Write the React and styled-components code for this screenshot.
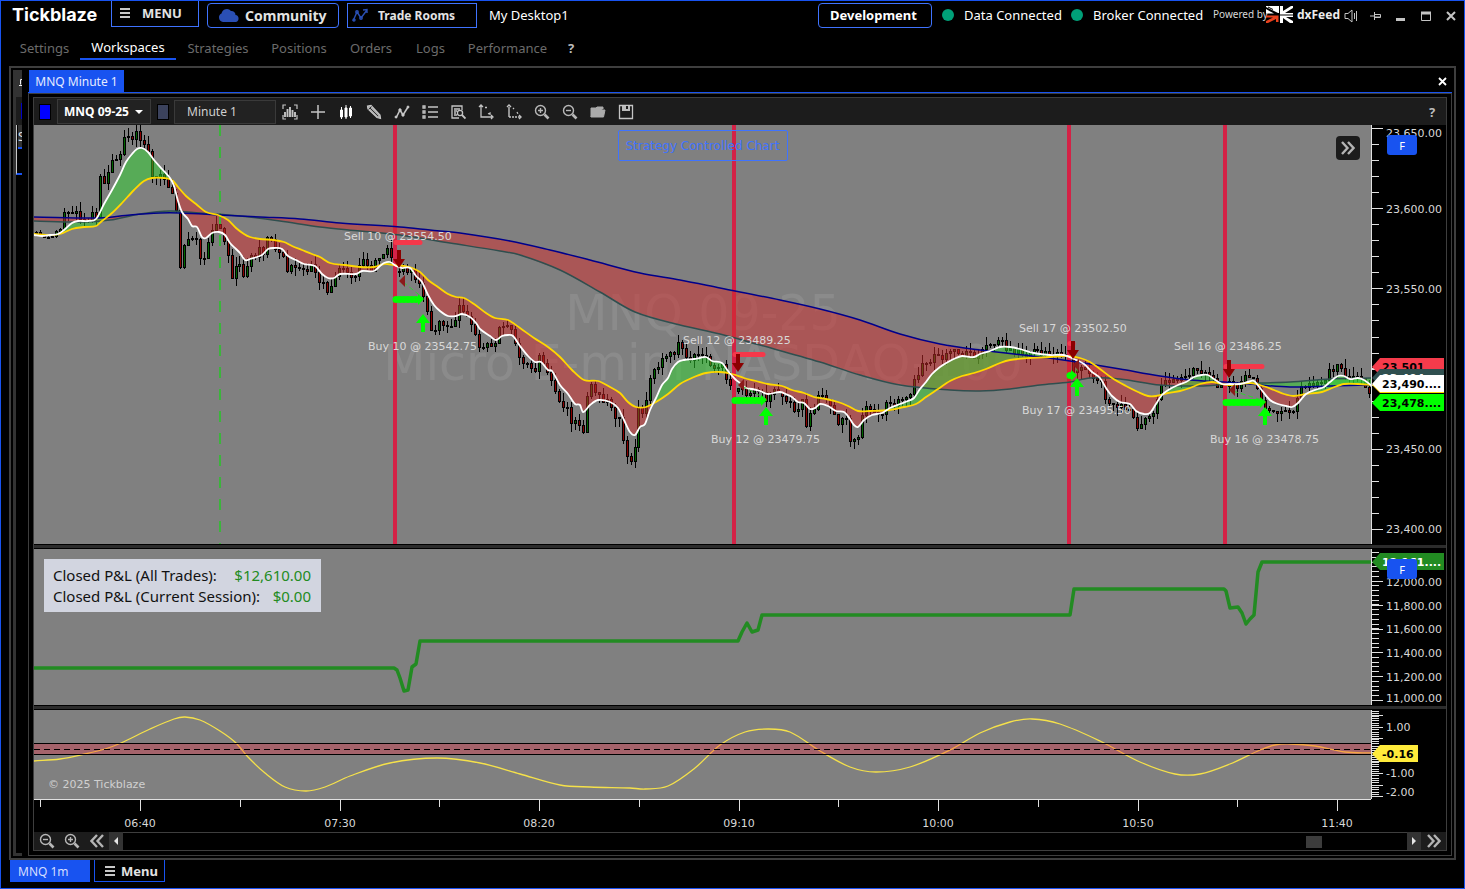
import React from 'react';
import styled, { createGlobalStyle } from 'styled-components';

const GlobalStyle = createGlobalStyle`
    * {
        box-sizing: border-box;
    }

    body {
        margin: 0;
        background: #000;
        color: #fff;
        font-family: 'Noto Sans', 'Open Sans', sans-serif;
    }

    button, input, select {
        font-family: inherit;
        color: inherit;
        margin: 0;
    }
`;

const Window = styled.div`
    display: flex;
    flex-direction: column;
    min-height: 100vh;
    border: 1px solid #1853f0;
    background: #000;
`;

const TitleBar = styled.header`
    display: flex;
    align-items: flex-start;
    height: 30px;
    padding-left: 11px;
    padding-right: 1px;
`;

const Brand = styled.h1`
    width: 99px;
    margin: 0;
    font-family: Inter, sans-serif;
    font-size: 18px;
    line-height: 28px;
    font-weight: 700;
`;

const TitleButton = styled.button`
    display: flex;
    align-items: center;
    gap: ${props => props.$gap || 0}px;
    width: ${props => props.$width}px;
    height: ${props => (props.$docked ? 26 : 25)}px;
    margin-top: ${props => (props.$docked ? 0 : 2)}px;
    margin-right: 8px;
    padding: 0 0 1px ${props => props.$pad}px;
    border: 1px solid #3f73ff;
    border-top-width: ${props => (props.$docked ? 0 : 1)}px;
    border-radius: ${props => (props.$round ? 4 : 0)}px;
    background: #000;
    color: ${props => props.$color || '#e3e3e3'};
    font-size: ${props => props.$size || 13}px;
    font-weight: 700;
    white-space: nowrap;
`;

const TitleText = styled.span`
    width: ${props => (props.$width ? `${props.$width}px` : 'auto')};
    font-size: 13px;
    line-height: 28px;
    white-space: nowrap;
`;

const DesktopName = styled(TitleText)`
    margin-left: 4px;
`;

const Spacer = styled.div`
    flex: 1;
`;

const Dot = styled.span`
    width: 12px;
    height: 12px;
    margin: 8px 10px 0 ${props => props.$left}px;
    border-radius: 50%;
    background: #00a078;
`;

const Powered = styled.span`
    width: 53px;
    font-size: 10px;
    line-height: 26px;
    color: #d8d8d8;
    white-space: nowrap;
`;

const FeedName = styled.strong`
    width: 45px;
    padding-left: 4px;
    font-size: 12px;
    line-height: 27px;
    color: #ececec;
`;

const FeedLogo = styled.svg`
    width: 27px;
    height: 17px;
    margin-top: 5px;
`;

const SystemButton = styled.button`
    display: flex;
    align-items: center;
    justify-content: center;
    width: 25px;
    height: 30px;
    padding: 0;
    border: 0;
    background: none;
    color: #c4c4c4;
`;

const Nav = styled.nav`
    display: flex;
    height: 35px;
    padding-left: 8px;
`;

const NavLink = styled.a`
    width: ${props => props.$width}px;
    height: 29px;
    border-bottom: 2px solid ${props => (props.$active ? '#1853f0' : 'transparent')};
    color: ${props => (props.$active ? '#fff' : '#6b6b6b')};
    font-size: 13px;
    line-height: ${props => (props.$active ? 33 : 34)}px;
    text-align: center;
    text-decoration: none;
`;

const Help = styled.button`
    padding: 0;
    border: 0;
    background: none;
    color: #bcbcbc;
    font-size: 13px;
    font-weight: 700;
    line-height: 34px;
    height: 34px;
    width: ${props => props.$width}px;
`;

const Dock = styled.main`
    flex: 1;
    display: flex;
    margin: 0 8px;
    padding: 2px 2px 2px 2px;
    border: 2px solid #3e3e3e;
`;

const Stub = styled.aside`
    display: flex;
    flex-direction: column;
    width: 9px;
    margin-right: 6px;
    overflow: hidden;
    border-left: 3px solid #333;
    border-bottom: 3px solid #333;
`;

const StubHead = styled.div`
    height: 27px;
    background: #333;
`;

const StubBar = styled.div`
    height: 28px;
    padding: 6px 0 5px 5px;
    background: #1c1c1c;

    &::before {
        content: '';
        display: block;
        height: 16px;
        background: #0000c8;
    }
`;

const StubBox = styled.div`
    height: 50px;
    padding-left: 1px;
    border-left: 1px solid #c8c8c8;
    border-bottom: 2px solid #1853f0;
    font-size: 13px;
    line-height: 22px;
    color: #e0e0e0;

    span {
        display: block;
        height: 24px;
        border-bottom: 2px solid #1853f0;
        background: #333;
    }
`;

const Document = styled.section`
    flex: 1;
    display: flex;
    flex-direction: column;
    min-width: 0;
`;

const TabStrip = styled.div`
    display: flex;
    align-items: flex-end;
    justify-content: space-between;
    padding-left: 1px;
    height: 23px;
    border-bottom: 1px solid #1853f0;
`;

const ChartTab = styled.button`
    width: 95px;
    height: 22px;
    padding: 0;
    border: 0;
    background: #1853f0;
    color: #e6ebff;
    font-size: 12px;
`;

const CloseTab = styled.button`
    display: flex;
    align-items: center;
    height: 22px;
    padding: 0 5px;
    border: 0;
    background: none;
`;

const Frame = styled.div`
    flex: 1;
    display: flex;
    padding: 3px 4px 4px;
    border: 1px solid #3e3e3e;
`;

const Chart = styled.div`
    flex: 1;
    display: flex;
    flex-direction: column;
    min-width: 0;
    border: 1px solid #3e3e3e;
`;

const Toolbar = styled.div`
    display: flex;
    align-items: center;
    height: 27px;
    padding-left: 5px;
    background: #1c1c1c;
`;

const Swatch = styled.button`
    width: 12px;
    height: 16px;
    padding: 0;
    margin-right: ${props => props.$right}px;
    border: 1px solid #000;
    background: ${props => props.$color};
`;

const SymbolBox = styled.label`
    display: flex;
    align-items: center;
    position: relative;
    width: 94px;
    height: 25px;
    margin-right: 6px;
    border: 1px solid #3a3a3a;
    background: #222;

    svg {
        position: absolute;
        right: 7px;
        pointer-events: none;
    }
`;

const SymbolSelect = styled.select`
    width: 100%;
    height: 100%;
    padding: 0 0 0 6px;
    border: 0;
    appearance: none;
    background: none;
    font-size: 12px;
    font-weight: 700;
`;

const PeriodInput = styled.input`
    width: 102px;
    height: 24px;
    padding: 0 12px;
    border: 1px solid #3a3a3a;
    background: #222;
    color: #d0d0d0;
    font-size: 12px;
`;

const IconButton = styled.button`
    display: flex;
    align-items: center;
    justify-content: center;
    width: ${props => props.$width || 28}px;
    height: ${props => props.$height || 27}px;
    padding: 0;
    border: 0;
    background: ${props => props.$bg || 'none'};
    color: #c4c4c4;
`;

const Pane = styled.div`
    display: flex;
    flex: ${props => props.$share} 1 0;
    min-height: 0;
`;

const Plot = styled.div`
    position: relative;
    flex: 1;
    min-width: 0;
    overflow: hidden;
    background: #808080;
`;

const Axis = styled.div`
    position: relative;
    width: 75px;
    overflow: hidden;
    background: #000;
`;

const Drawing = styled.svg`
    position: absolute;
    inset: 0;
    width: 100%;
    height: 100%;
    font-family: 'DejaVu Sans', Verdana, sans-serif;
    font-size: 11px;
`;

const Splitter = styled.div`
    height: 5px;
    border: 1px solid #000;
    border-width: 1px 0;
    background: #2c2c2c;
`;

const TimeAxis = styled.div`
    display: flex;
    position: relative;
    height: 33px;
`;

const StrategyButton = styled.button`
    position: absolute;
    top: 5px;
    left: 50%;
    transform: translateX(-50%);
    width: 170px;
    height: 31px;
    padding: 0;
    border: 1px solid #3f73ff;
    border-radius: 2px;
    background: none;
    color: #3f73ff;
    font-family: 'DejaVu Sans', Verdana, sans-serif;
    font-size: 12px;
`;

const ExpandButton = styled.button`
    position: absolute;
    top: 11px;
    right: 11px;
    display: flex;
    align-items: center;
    justify-content: center;
    width: 24px;
    height: 24px;
    padding: 0;
    border: 0;
    border-radius: 4px;
    background: #1c1c1c;
    color: #c4c4c4;
`;

const FixedButton = styled.button`
    position: absolute;
    top: 10px;
    left: 16px;
    width: 30px;
    height: 20px;
    padding: 0;
    border: 0;
    border-radius: 3px;
    background: #1853f0;
    color: #fff;
    font-size: 11px;
`;

const Legend = styled.dl`
    position: absolute;
    top: 10px;
    left: 10px;
    width: 277px;
    margin: 0;
    padding: 6px 10px 5px 9px;
    background: #d2d5e0;
    color: #111;
    font-size: 15px;
    line-height: 21px;

    div {
        display: flex;
        justify-content: space-between;
    }

    dd {
        margin: 0;
        color: #228b22;
    }
`;

const ScrollRow = styled.div`
    display: flex;
    height: 18px;
`;

const Track = styled.div`
    flex: 1;
    display: flex;
    align-items: center;
    justify-content: flex-end;
    padding-right: 85px;
    border-top: 1px solid #3e3e3e;
`;

const Thumb = styled.div`
    width: 16px;
    height: 12px;
    background: #3c3c3c;
`;

const Footer = styled.footer`
    display: flex;
    gap: 4px;
    height: 28px;
    padding-left: 9px;
`;

const DesktopTab = styled.button`
    width: 80px;
    height: 22px;
    padding: 0 0 0 8px;
    border: 0;
    background: #1853f0;
    color: #d5deff;
    font-size: 12px;
    text-align: left;
`;

const FooterMenu = styled.button`
    display: flex;
    align-items: center;
    gap: 6px;
    width: 71px;
    height: 22px;
    padding: 0 0 0 10px;
    border: 1px solid #1853f0;
    border-top: 0;
    background: #000;
    color: #e3e3e3;
    font-size: 13px;
    font-weight: 700;
`;

const FAST = [
    34,235, 42,236, 50,235, 58,234, 64,230, 72,223, 78,221, 88,221, 96,219, 104,204, 112,190, 120,175, 126,162, 132,154,
    137,149, 142,148, 148,152, 154,160, 162,169, 170,178, 174,186, 178,201, 182,212, 188,219, 192,226, 197,227, 202,237,
    206,238, 212,233, 219,232, 225,235, 230,243, 236,249, 240,253, 245,260, 250,259, 262,255, 268,249, 274,248, 282,249,
    288,256, 296,260, 304,264, 315,266, 322,274, 328,278, 334,278, 340,274, 356,274, 362,271, 374,271, 380,266, 384,263,
    390,262, 396,266, 402,268, 410,268, 416,276, 422,282, 428,295, 434,305, 440,311, 448,316, 456,316, 462,314, 470,317,
    476,323, 480,329, 490,336, 496,340, 502,336, 508,335, 513,336, 520,346, 528,356, 535,362, 541,362, 548,370, 552,371,
    560,385, 568,394, 575,404, 580,405, 583,412, 590,405, 598,400, 610,402, 618,408, 624,420, 630,432, 635,435, 640,427,
    645,424, 650,410, 656,398, 662,385, 668,378, 672,369, 678,362, 684,360, 694,359, 700,358, 706,357, 712,361, 722,363,
    728,371, 735,379, 740,383, 746,388, 752,389, 760,391, 768,394, 780,392, 788,395, 792,397, 798,402, 804,403, 810,409,
    815,408, 820,404, 828,406, 836,411, 844,412, 850,419, 854,425, 858,427, 864,420, 872,415, 882,413, 890,408, 900,404,
    908,401, 914,398, 920,389, 926,382, 932,374, 940,367, 948,362, 956,358, 962,356, 974,357, 980,354, 990,351, 1000,347,
    1010,347, 1020,349, 1034,353, 1050,355, 1064,355, 1074,359, 1084,364, 1092,372, 1100,378, 1106,388, 1112,396,
    1120,402, 1130,404, 1136,411, 1144,414, 1150,413, 1156,404, 1162,395, 1170,389, 1178,385, 1186,382, 1194,377,
    1202,375, 1208,375, 1214,379, 1222,384, 1230,384, 1240,384, 1248,382, 1254,381, 1260,388, 1270,400, 1278,404,
    1286,406, 1292,407, 1298,403, 1306,394, 1318,389, 1324,387, 1330,382, 1338,376, 1344,376, 1350,379, 1358,378,
    1364,380, 1372,386,
];

const SLOW = [
    34,234, 50,235, 60,234, 72,229, 84,227, 96,226, 102,221, 112,213, 122,203, 134,190, 144,181, 152,178, 164,178,
    172,180, 178,187, 186,196, 196,204, 206,212, 218,215, 228,220, 236,228, 244,234, 250,237, 260,239, 274,240, 284,242,
    292,246, 302,250, 312,254, 320,257, 330,263, 345,265, 360,267, 374,267, 384,264, 394,265, 404,266, 412,268, 420,272,
    428,280, 438,287, 448,294, 456,297, 464,298, 474,304, 486,313, 495,318, 508,320, 520,328, 534,338, 548,347, 560,357,
    572,370, 584,380, 598,381, 610,387, 620,393, 628,402, 636,407, 646,407, 656,402, 668,394, 680,384, 694,377, 706,373,
    720,372, 732,374, 744,378, 756,381, 768,384, 782,386, 792,390, 804,393, 814,397, 826,399, 838,402, 848,406, 858,411,
    870,411, 890,410, 904,407, 916,404, 926,397, 938,389, 950,381, 962,376, 974,373, 986,369, 1000,363, 1010,360,
    1030,358, 1050,357, 1066,356, 1080,358, 1090,362, 1100,369, 1112,378, 1126,386, 1138,392, 1148,396, 1156,396,
    1168,393, 1180,391, 1190,388, 1200,384, 1212,382, 1222,384, 1230,385, 1250,383, 1260,385, 1274,390, 1284,394,
    1294,396, 1306,394, 1322,392, 1332,388, 1344,384, 1358,384, 1372,385,
];

const TREND = [
    34,217, 100,218, 130,215, 160,213, 180,213, 220,215, 260,217, 300,219, 340,223, 400,227, 430,230, 460,233, 510,241,
    550,250, 590,260, 640,273, 680,280, 720,288, 780,300, 820,309, 860,320, 900,334, 940,344, 980,350, 1040,357,
    1070,361, 1096,365, 1120,369, 1160,376, 1190,380, 1224,382, 1260,385, 1290,387, 1330,386, 1372,385,
];

const BASE = [
    34,221, 80,222, 110,220, 140,214, 170,211, 200,213, 240,216, 280,221, 320,227, 360,231, 400,235, 450,243, 500,251,
    520,255, 560,270, 600,292, 635,312, 680,325, 720,334, 760,345, 820,362, 860,375, 900,385, 950,390, 980,391,
    1010,389, 1040,385, 1070,382, 1090,378, 1120,379, 1160,385, 1200,386, 1230,384, 1290,382, 1330,379, 1372,378,
];

const CLOSES = [
    34,233, 42,236, 50,237, 56,231, 62,228, 64,213, 70,215, 78,215, 84,222, 90,220, 92,210, 96,214, 99,175, 104,183,
    108,170, 112,158, 120,156, 124,138, 130,140, 134,130, 138,134, 142,145, 148,152, 152,176, 158,174, 162,178, 170,188,
    174,200, 178,225, 180,271, 184,248, 188,238, 194,237, 200,255, 206,256, 210,230, 216,224, 222,230, 226,247, 232,275,
    240,262, 244,282, 248,262, 254,255, 260,248, 264,252, 268,232, 274,245, 282,252, 288,273, 292,265, 298,262, 304,272,
    312,267, 318,280, 324,286, 328,294, 332,280, 336,272, 342,265, 350,275, 356,272, 362,260, 370,268, 378,262, 382,250,
    388,250, 392,258, 396,276, 400,272, 404,268, 410,270, 414,280, 420,285, 424,303, 428,316, 432,333, 438,323, 444,325,
    450,325, 456,320, 460,302, 466,315, 474,328, 480,353, 486,342, 494,347, 498,330, 502,325, 508,323, 512,335, 518,352,
    520,369, 526,362, 534,374, 540,355, 546,372, 554,385, 558,403, 566,406, 572,423, 578,418, 582,438, 586,405, 590,383,
    596,393, 602,403, 610,402, 616,418, 620,418, 624,446, 628,460, 634,455, 638,408, 644,420, 648,385, 654,370, 660,363,
    668,358, 674,350, 680,344, 686,356, 692,358, 698,355, 706,354, 712,366, 718,364, 724,368, 728,388, 734,390, 740,385,
    746,393, 754,392, 760,388, 766,403, 770,390, 776,388, 782,396, 790,402, 798,412, 802,398, 806,423, 812,413, 818,392,
    824,400, 830,408, 838,420, 846,417, 850,440, 854,442, 858,438, 862,415, 866,405, 874,410, 880,418, 888,398, 894,404,
    902,396, 910,393, 918,372, 924,365, 932,358, 940,355, 944,358, 952,350, 960,353, 968,352, 974,355, 980,350, 988,348,
    994,348, 998,340, 1004,346, 1012,350, 1022,355, 1034,350, 1042,352, 1050,352, 1058,353, 1068,358, 1074,372,
    1082,365, 1090,372, 1094,383, 1100,380, 1106,400, 1112,405, 1118,412, 1122,402, 1126,408, 1134,415, 1138,428,
    1144,418, 1150,420, 1156,402, 1160,382, 1166,380, 1174,380, 1184,375, 1190,373, 1196,366, 1202,370, 1208,375,
    1214,382, 1220,390, 1230,382, 1236,385, 1242,382, 1248,375, 1254,378, 1260,398, 1266,405, 1270,415, 1276,410,
    1282,413, 1288,411, 1294,408, 1300,390, 1306,382, 1314,386, 1322,380, 1330,370, 1338,363, 1344,374, 1352,380,
    1358,376, 1364,386, 1372,392,
];

const PROFIT = [
    34,668, 394,668, 397,670, 400,678, 404,691, 408,690, 412,667, 416,664, 420,641, 738,641, 742,632, 747,623, 752,632,
    758,630, 762,615, 1070,615, 1074,589, 1224,589, 1226,591, 1230,608, 1238,607, 1242,613, 1246,624, 1250,619,
    1254,615, 1258,572, 1262,562, 1372,562,
];

const CYCLE = [
    34,761, 60,759, 85,754, 105,749, 121,743, 150,729, 174,719, 185,717, 200,720, 220,731, 236,743, 248,757, 265,773,
    285,787, 306,791, 325,787, 350,776, 390,763, 437,758, 480,763, 520,774, 560,785, 590,787, 630,788, 645,789, 668,786,
    695,768, 720,745, 745,732, 768,729, 790,732, 820,751, 850,767, 876,772, 910,767, 950,750, 980,733, 1010,722,
    1032,719, 1060,724, 1100,741, 1140,762, 1175,774, 1200,774, 1230,764, 1260,750, 1275,745, 1290,744, 1315,746,
    1345,752, 1372,753,
];

const TRADES = [
    { bar: 395, end: 420, stop: 242, target: 299, sell: 250, buy: 314, exit: 423, mark: 281, sellText: [344, 240, 'Sell 10 @ 23554.50'], buyText: [368, 350, 'Buy 10 @ 23542.75'] },
    { bar: 734, end: 763, stop: 354, target: 400, sell: 354, buy: 407, exit: 766, mark: 385, sellText: [683, 344, 'Sell 12 @ 23489.25'], buyText: [711, 443, 'Buy 12 @ 23479.75'] },
    { bar: 1069, end: 1073, stop: 343, target: 375, sell: 341, buy: 378, exit: 1077, mark: 365, sellText: [1019, 332, 'Sell 17 @ 23502.50'], buyText: [1022, 414, 'Buy 17 @ 23495.50'] },
    { bar: 1225, end: 1262, stop: 366, target: 402, sell: 360, buy: 407, exit: 1265, mark: 390, sellText: [1174, 350, 'Sell 16 @ 23486.25'], buyText: [1210, 443, 'Buy 16 @ 23478.75'] },
];

const toPoints = data => {
    const points = [];
    for (let i = 0; i < data.length; i += 2) {
        points.push([data[i], data[i + 1]]);
    }
    return points;
};

const linePath = data => `M${toPoints(data).map(p => p.join(' ')).join('L')}`;

const curvePath = data => {
    const pts = toPoints(data);
    let d = `M${pts[0]}`;
    for (let i = 0; i < pts.length - 1; i++) {
        const a = pts[i - 1] || pts[i];
        const b = pts[i];
        const c = pts[i + 1];
        const e = pts[i + 2] || c;
        const third = (c[0] - b[0]) / 3;
        const inSlope = (c[1] - a[1]) / (c[0] - a[0]);
        const outSlope = (e[1] - b[1]) / (e[0] - b[0]);
        d += `C${b[0] + third} ${b[1] + inSlope * third} ${c[0] - third} ${c[1] - outSlope * third} ${c[0]} ${c[1]}`;
    }
    return d;
};

const valueAt = (pts, x) => {
    let i = 1;
    while (i < pts.length - 1 && pts[i][0] < x) i++;
    const [x0, y0] = pts[i - 1];
    const [x1, y1] = pts[i];
    return y0 + ((y1 - y0) * (x - x0)) / (x1 - x0);
};

// Splits the area between two lines by which one is on top
const bands = (first, second) => {
    const a = toPoints(first);
    const b = toPoints(second);
    let up = '';
    let down = '';
    let run = [];
    let sign = null;
    const flush = () => {
        if (run.length > 1) {
            const top = run.map(r => `${r[0]} ${r[1]}`);
            const bottom = run.map(r => `${r[0]} ${r[2]}`).reverse();
            const d = `M${top.concat(bottom).join('L')}Z`;
            if (sign) up += d;
            else down += d;
        }
    };
    for (let x = 34; x <= 1372; x += 2) {
        const row = [x, valueAt(a, x), valueAt(b, x)];
        const next = row[1] < row[2];
        if (sign !== null && next !== sign) {
            run.push(row);
            flush();
            run = [];
        }
        sign = next;
        run.push(row);
    }
    flush();
    return { up, down };
};

const noise = n => {
    const v = Math.sin(n * 127.1) * 43758.5453;
    return v - Math.floor(v);
};

const buildCandles = () => {
    const pts = toPoints(CLOSES);
    const candles = [];
    let open = 232;
    for (let i = 0; i < 335; i++) {
        const x = Math.round(36 + i * 3.99);
        const calm = x < 62;
        const close = Math.round(valueAt(pts, x) + (noise(i) - 0.5) * (calm ? 3 : 8));
        const top = Math.min(open, close);
        const bottom = Math.max(open, close);
        const scale = calm ? 2 : 9;
        candles.push({
            x,
            top,
            height: Math.max(bottom - top, 1),
            high: x === 1050 ? 330 : Math.round(top - noise(i + 400) * scale),
            low: x === 1090 ? 405 : Math.round(bottom + noise(i + 900) * scale),
            rising: close < open,
        });
        open = close;
    }
    return candles;
};

const CANDLES = buildCandles();
const CLOUD = bands(TREND, BASE);
const RIBBON = bands(FAST, SLOW);

const range = (count, start, step) => Array.from({ length: count }, (_, i) => Math.round(start + i * step));

const Bars = ({ size = 12, width = 10 }) => (
    <svg width={width} height={size} viewBox="0 0 10 12" stroke="#c8c8c8" strokeWidth="2">
        <path d="M0 2H10M0 6H10M0 10H10" />
    </svg>
);

const Chevrons = ({ flip }) => (
    <svg width="14" height="14" viewBox="0 0 14 14" fill="none" stroke="#b4b4b4" strokeWidth="2.4" transform={flip ? 'scale(-1 1)' : undefined}>
        <path d="M1 1L6.500 7L1 13M7 1L12.500 7L7 13" />
    </svg>
);

const Magnifier = ({ plus }) => (
    <svg width="16" height="16" viewBox="0 0 16 16" fill="none" stroke="#b8b8b8" strokeWidth="1.400">
        <circle cx="6.500" cy="6.500" r="5" />
        <path d={plus ? 'M4 6.500H9M6.500 4V9' : 'M4 6.500H9'} />
        <path d="M10.500 10.500L14.500 14.500" strokeWidth="2.600" />
    </svg>
);

const Triangle = ({ flip }) => (
    <svg width="4" height="8" viewBox="0 0 4 8">
        <path d={flip ? 'M0 0L4 4L0 8Z' : 'M4 0L0 4L4 8Z'} fill="#e6e6e6" />
    </svg>
);

const TOOLS = [
    ['Chart type', <g key="i"><path d="M1 5V1H4M12 1H15V5M1 11V15H4M12 15H15V11" strokeWidth="1.200" /><path d="M3 8V13M5.500 5V13M8 3V13M10.500 6V13M13 8V13" strokeWidth="1.900" /></g>],
    ['Crosshair', <path key="i" d="M8 1V15M1 8H15" strokeWidth="1.500" />],
    ['Candles', <path key="i" stroke="#fff" strokeWidth="1" fill="#fff" d="M3.500 3V15M2.500 6H4.500V13H2.500ZM8 1V15M7 4H9V13H7ZM12.500 2V14M11.500 4H13.500V12H11.500Z" />],
    ['Draw', <g key="i"><path d="M1.500 2L5 1.500L14 11L14.500 14.500L11 13.500L2 5Z" fill="#aaa" strokeWidth="1.200" /><path d="M4 4L12 12M2.500 5.500L5.500 2.500" stroke="#333" strokeWidth="1" /></g>],
    ['Indicators', <g key="i"><path d="M2 14L6 6L9 11L14 3" strokeWidth="1.600" /><circle cx="6" cy="6" r="1.200" fill="#ddd" /><circle cx="2" cy="13" r="1" fill="#ddd" /><circle cx="9" cy="11" r="1.200" fill="#ddd" /><circle cx="14" cy="3" r="1" fill="#ddd" /></g>],
    ['List', <path key="i" d="M6 3H16M6 8H16M6 13H16M1 2H3V4H1ZM1 7H3V9H1ZM1 12H3V14H1Z" strokeWidth="1.300" />],
    ['Data window', <g key="i"><path d="M12 6V2H2V14H9M4 5H10M4 7H7M4 9H6M4 11H7" strokeWidth="1.300" /><circle cx="10" cy="9" r="2.600" strokeWidth="1.300" /><path d="M12 11L15.500 14.500" strokeWidth="1.800" /></g>],
    ['Scale', <path key="i" d="M3 2V13H14M1 3L3 1L5 3M13 11L15 13L13 15M7 3.500H9M10 10L12 9V11" strokeWidth="1.300" />],
    ['Fix scale', <g key="i"><path d="M3 3V13M1 3L3 1L5 3M13 11L15 13L13 15" strokeWidth="1.400" /><path d="M3 13H14M7 4L8 5M11 8L12 10" strokeWidth="1.300" strokeDasharray="2 1" /></g>],
    ['Zoom in', null],
    ['Zoom out', null],
    ['Open', <path key="i" d="M1 13V4H6L7 3H13V5M1 13L3 6H15L13.500 13Z" fill="#aaa" stroke="#aaa" strokeWidth="1" />],
    ['Save', <g key="i"><path d="M1.500 1.500H14.500V14.500H1.500Z" strokeWidth="1.300" /><path d="M4 2H12V7H4Z" fill="#bbb" stroke="none" /><path d="M9 2V5" stroke="#1c1c1c" strokeWidth="2" /></g>],
];

const MENU_ITEMS = [
    ['Settings', 71], ['Workspaces', 96], ['Strategies', 84], ['Positions', 78], ['Orders', 66], ['Logs', 53], ['Performance', 101],
];

const Trade = ({ trade }) => {
    const x = trade.bar + 4;
    return (
        <g>
            <path d={`M${trade.bar + 1} ${trade.stop + 0.5}H${trade.end}`} stroke="#f5384a" strokeWidth="5" strokeLinecap="round" />
            <path d={`M${trade.bar + 1} ${trade.target + 0.5}H${trade.end}`} stroke="#0f0" strokeWidth="7" strokeLinecap="round" strokeDasharray="0 4" />
            <path d={`M${trade.bar} ${trade.target + 0.5}H${trade.end}`} stroke="#0f0" strokeWidth="5" />
            <path d={`M${trade.end - 2} ${trade.target - 5}L${trade.end + 4} ${trade.target}L${trade.end - 2} ${trade.target + 6}Z`} fill="#0f0" />
            <path d={`M${x + 4} ${trade.mark + 1}L${trade.exit} ${trade.target - 1}`} stroke="#32cd32" strokeWidth="1" strokeDasharray="5 3" />
            <path d={`M${x} ${trade.mark}L${x + 6} ${trade.mark - 6}V${trade.mark + 6}Z`} fill="#8b1a1a" />
            <path d={`M${x - 2} ${trade.sell}h4v9h4l-6 9l-6 -9h4Z`} fill="#8b0000" />
            <path d={`M${trade.exit} ${trade.buy}l7 9h-5v9h-4v-9h-5Z`} fill="#0f0" />
            <text x={trade.sellText[0]} y={trade.sellText[1]}>{trade.sellText[2]}</text>
            <text x={trade.buyText[0]} y={trade.buyText[1]}>{trade.buyText[2]}</text>
        </g>
    );
};

const PricePlot = () => (
    <Drawing viewBox="34 125 1337 419" preserveAspectRatio="xMaxYMin slice">
        <g fill="#8b8b8b" fontSize="49" textAnchor="middle">
            <text x="703" y="330">MNQ 09-25</text>
            <text x="703" y="380">Micro E-mini NASDAQ-100</text>
        </g>
        <g shapeRendering="crispEdges">
            {CANDLES.map(c => (
                <g key={c.x}>
                    <path d={`M${c.x + 0.5} ${c.high}V${c.low}`} stroke="#000" />
                    <rect x={c.x - 0.5} y={c.top + 0.5} width="2" height={c.height} fill={c.rising ? '#006400' : '#8b0000'} stroke="#000" />
                </g>
            ))}
        </g>
        <g stroke="#d32246" strokeWidth="4">
            {TRADES.map(t => <path key={t.bar} d={`M${t.bar} 125V544`} />)}
        </g>
        <g fillOpacity="0.5">
            <path d={CLOUD.down} fill="#2ed62e" />
            <path d={CLOUD.up} fill="#d32c2c" />
            <path d={RIBBON.up} fill="#2ed62e" />
            <path d={RIBBON.down} fill="#d32c2c" />
        </g>
        <path d="M220 125V544" stroke="#3cb43c" strokeWidth="2" strokeDasharray="11 11" shapeRendering="crispEdges" />
        <g fill="none" strokeWidth="1.500">
            <path d={curvePath(BASE)} stroke="#2f4f4f" />
            <path d={curvePath(TREND)} stroke="#00008b" />
            <path d={curvePath(SLOW)} stroke="#ffd700" strokeWidth="1.800" />
            <path d={curvePath(FAST)} stroke="#fff" strokeWidth="1.800" />
        </g>
        <g fill="#d8d8d8">
            {TRADES.map(t => <Trade key={t.bar} trade={t} />)}
        </g>
    </Drawing>
);

const Tag = ({ y, color, text, ink = '#000', width = 72 }) => (
    <g>
        <path d={`M1372 ${y}L1380 ${y - 9}H${1372 + width}V${y + 8}H1380Z`} fill={color} />
        <text x="1382" y={y + 4} fill={ink} fontWeight="700">{text}</text>
    </g>
);

const Ticks = ({ major, minor }) => (
    <path
        stroke="#e0e0e0"
        shapeRendering="crispEdges"
        d={major.map(y => `M1371 ${y + 0.5}h12`).join('') + minor.map(y => `M1371 ${y + 0.5}h8`).join('')}
    />
);

const Labels = ({ items }) => (
    <g fill="#d8d8d8">
        {items.map(([y, text]) => <text key={text} x="1386" y={y + 4}>{text}</text>)}
    </g>
);

const TIMES = ['06:40', '07:30', '08:20', '09:10', '10:00', '10:50', '11:40'];

function App() {
    return (
        <Window>
            <GlobalStyle />
            <TitleBar>
                <Brand>Tickblaze</Brand>
                <TitleButton $width={88} $pad={8} $gap={12} $docked><Bars /> MENU</TitleButton>
                <TitleButton $width={132} $pad={10} $gap={6} $size={14} $round>
                    <svg width="21" height="14" viewBox="0 0 21 14">
                        <path d="M5 14A4.500 4.500 0 0 1 3.500 5.500A5.500 5.500 0 0 1 13 3A4 4 0 0 1 17.500 7A3.600 3.600 0 0 1 18 14Z" fill="#2a4fb4" />
                    </svg>
                    Community
                </TitleButton>
                <TitleButton $width={130} $pad={4} $gap={10} $size={12}>
                    <svg width="16" height="14" viewBox="0 0 16 14" fill="none" stroke="#2a4fb4" strokeWidth="1.400">
                        <path d="M1 13L5 4L9 10L15 2M11 2L15 1.500V5" />
                        <circle cx="5" cy="4" r="1.200" /><circle cx="9" cy="10" r="1.200" /><circle cx="2" cy="12" r="1" />
                    </svg>
                    Trade Rooms
                </TitleButton>
                <DesktopName>My Desktop1</DesktopName>
                <Spacer />
                <TitleButton $width={114} $pad={11} $size={13} $color="#fff" $round>Development</TitleButton>
                <Dot $left={2} />
                <TitleText $width={97}>Data Connected</TitleText>
                <Dot $left={10} />
                <TitleText $width={120}>Broker Connected</TitleText>
                <Powered>Powered by</Powered>
                <FeedLogo viewBox="0 0 27 17" fill="#fff">
                    <path d="M0 0H13V7H12L0 1ZM0 3L8 7.500H0Z" />
                    <path d="M0 9.500H12.500V16H10V13L2 17H0V15L7 11.500H0Z" fill="#e8401c" />
                    <path d="M14 0H17V5L25 0H27V2L19 7H27V8.500H14ZM14 9.500H27V11H20L27 15V17H24L17 12V17H14Z" />
                    <path d="M2 1L7 3.500M17.500 0.500H23" stroke="#000" />
                </FeedLogo>
                <FeedName>dxFeed</FeedName>
                <SystemButton aria-label="Sound">
                    <svg width="14" height="14" viewBox="0 0 14 14" fill="none" stroke="currentColor"><path d="M1 4.500H4L8 1V13L4 9.500H1ZM10.500 4V10M12.500 2V12" /></svg>
                </SystemButton>
                <SystemButton aria-label="Pin">
                    <svg width="12" height="10" viewBox="0 0 12 10" fill="none" stroke="currentColor"><path d="M0 5H4M4.500 1V9M5 3.500H10.500V6.500H5M5 6H10" /></svg>
                </SystemButton>
                <SystemButton aria-label="Minimize">
                    <svg width="10" height="10" viewBox="0 0 10 10"><path d="M0 7H9V10H0Z" fill="currentColor" /></svg>
                </SystemButton>
                <SystemButton aria-label="Maximize">
                    <svg width="10" height="10" viewBox="0 0 10 10" fill="none" stroke="currentColor"><path d="M0.500 1.500H9.500V9.500H0.500Z" /><path d="M0 2H10" strokeWidth="3" /></svg>
                </SystemButton>
                <SystemButton aria-label="Close">
                    <svg width="10" height="10" viewBox="0 0 10 10" stroke="currentColor" strokeWidth="2"><path d="M1 1L9 9M9 1L1 9" /></svg>
                </SystemButton>
            </TitleBar>
            <Nav>
                {MENU_ITEMS.map(([label, width]) => (
                    <NavLink key={label} href="#" $width={width} $active={label === 'Workspaces'}>{label}</NavLink>
                ))}
                <Help $width={26}>?</Help>
            </Nav>
            <Dock>
                <Stub>
                    <StubHead>
                        <svg width="6" height="20" viewBox="0 0 6 20" fill="none" stroke="#eee"><path d="M6 9.500H4.500V14.500M3 15.500H6" /></svg>
                    </StubHead>
                    <StubBar />
                    <StubBox><span>S</span></StubBox>
                </Stub>
                <Document>
                    <TabStrip>
                        <ChartTab>MNQ Minute 1</ChartTab>
                        <CloseTab aria-label="Close tab">
                            <svg width="9" height="9" viewBox="0 0 9 9" stroke="#fff" strokeWidth="1.800"><path d="M1 1L8 8M8 1L1 8" /></svg>
                        </CloseTab>
                    </TabStrip>
                    <Frame>
                        <Chart>
                            <Toolbar>
                                <Swatch $color="#0000ff" $right={6} aria-label="Link colour" />
                                <SymbolBox>
                                    <SymbolSelect aria-label="Symbol"><option>MNQ 09-25</option></SymbolSelect>
                                    <svg width="8" height="4" viewBox="0 0 8 4"><path d="M0 0H8L4 4Z" fill="#fff" /></svg>
                                </SymbolBox>
                                <Swatch $color="#3b425c" $right={5} aria-label="Period colour" />
                                <PeriodInput aria-label="Period" defaultValue="Minute 1" />
                                {TOOLS.map(([label, icon]) => (
                                    <IconButton key={label} aria-label={label}>
                                        {icon
                                            ? <svg width="16" height="16" viewBox="0 0 16 16" fill="none" stroke="#c4c4c4">{icon}</svg>
                                            : <Magnifier plus={label === 'Zoom in'} />}
                                    </IconButton>
                                ))}
                                <Spacer />
                                <Help $width={28}>?</Help>
                            </Toolbar>
                            <Pane $share={419}>
                                <Plot>
                                    <PricePlot />
                                    <StrategyButton>Strategy Controlled Chart</StrategyButton>
                                    <ExpandButton aria-label="Expand"><Chevrons /></ExpandButton>
                                </Plot>
                                <Axis>
                                    <Drawing viewBox="1371 125 75 419" preserveAspectRatio="xMinYMin slice">
                                        <path d="M1371.500 125V544" stroke="#e0e0e0" />
                                        <Ticks major={[128, 208, 288, 368, 449, 529]} minor={range(26, 128, 16.04)} />
                                        <Labels items={[[133, '23,650.00'], [209, '23,600.00'], [289, '23,550.00'], [449, '23,450.00'], [529, '23,400.00']]} />
                                        <Tag y={367} color="#f53b4b" text="23,501" />
                                        <Tag y={378} color="#2f4f4f" text="23,494...." ink="#fff" />
                                        <Tag y={385} color="#ffd700" text="" />
                                        <Tag y={384} color="#fff" text="23,490...." />
                                        <Tag y={403} color="#0f0" text="23,478...." />
                                    </Drawing>
                                    <FixedButton>F</FixedButton>
                                </Axis>
                            </Pane>
                            <Splitter />
                            <Pane $share={156}>
                                <Plot>
                                    <Drawing viewBox="34 549 1337 156" preserveAspectRatio="xMaxYMin slice">
                                        <path d={linePath(PROFIT)} fill="none" stroke="#228b22" strokeWidth="3.500" strokeLinejoin="round" />
                                    </Drawing>
                                    <Legend>
                                        <div><dt>Closed P&amp;L (All Trades):</dt><dd>$12,610.00</dd></div>
                                        <div><dt>Closed P&amp;L (Current Session):</dt><dd>$0.00</dd></div>
                                    </Legend>
                                </Plot>
                                <Axis>
                                    <Drawing viewBox="1371 549 75 156" preserveAspectRatio="xMinYMin slice">
                                        <path d="M1371.500 549V705" stroke="#e0e0e0" />
                                        <Ticks major={range(6, 581, 23.8)} minor={range(32, 552, 4.77)} />
                                        <Labels items={[[582, '12,000.00'], [606, '11,800.00'], [629, '11,600.00'], [653, '11,400.00'], [677, '11,200.00'], [698, '11,000.00']]} />
                                        <Tag y={562} color="#228b22" text="12,161...." ink="#fff" />
                                    </Drawing>
                                    <FixedButton>F</FixedButton>
                                </Axis>
                            </Pane>
                            <Splitter />
                            <Pane $share={89}>
                                <Plot>
                                    <Drawing viewBox="34 710 1337 89" preserveAspectRatio="xMaxYMin slice">
                                        <path d={curvePath(CYCLE)} fill="none" stroke="#f5e14a" strokeWidth="1.300" />
                                        <path d="M34 743.500H1371V754.500H34Z" fill="#f8223c" fillOpacity="0.3" />
                                        <path d="M34 743.500H1371M34 754.500H1371" stroke="#000" />
                                        <path d="M34 749.500H1371" stroke="#000" strokeDasharray="6 4" />
                                        <text x="48" y="788" fill="#d0d0d0">© 2025 Tickblaze</text>
                                    </Drawing>
                                </Plot>
                                <Axis>
                                    <Drawing viewBox="1371 710 75 89" preserveAspectRatio="xMinYMin slice">
                                        <path d="M1371.500 710V799" stroke="#e0e0e0" />
                                        <Ticks major={range(8, 715, 11.6)} minor={range(38, 711, 2.3)} />
                                        <Labels items={[[727, '1.00'], [773, '-1.00'], [792, '-2.00']]} />
                                        <Tag y={754} color="#ffeb3b" text="-0.16" width={46} />
                                    </Drawing>
                                </Axis>
                            </Pane>
                            <TimeAxis>
                                <Drawing viewBox="34 799 1412 33" preserveAspectRatio="xMaxYMin slice">
                                    <g stroke="#e0e0e0" shapeRendering="crispEdges">
                                        <path d="M34 799.500H1371" />
                                        <path d={range(7, 140, 199.5).map(x => `M${x + 0.5} 800v11`).join('')} />
                                        <path d={range(7, 40, 199.5).map(x => `M${x + 0.5} 800v7`).join('')} />
                                    </g>
                                    <g fill="#d8d8d8" textAnchor="middle">
                                        {TIMES.map((time, i) => <text key={time} x={Math.round(140 + i * 199.5)} y="827">{time}</text>)}
                                    </g>
                                </Drawing>
                            </TimeAxis>
                            <ScrollRow>
                                <IconButton $width={25} $height={18} $bg="#1c1c1c" aria-label="Zoom out"><Magnifier /></IconButton>
                                <IconButton $width={25} $height={18} $bg="#1c1c1c" aria-label="Zoom in"><Magnifier plus /></IconButton>
                                <IconButton $width={25} $height={18} $bg="#1c1c1c" aria-label="Page back"><Chevrons flip /></IconButton>
                                <IconButton $width={14} $height={18} $bg="#333" aria-label="Back"><Triangle /></IconButton>
                                <Track><Thumb /></Track>
                                <IconButton $width={14} $height={18} $bg="#333" aria-label="Forward"><Triangle flip /></IconButton>
                                <IconButton $width={25} $height={18} $bg="#1c1c1c" aria-label="Page forward"><Chevrons /></IconButton>
                            </ScrollRow>
                        </Chart>
                    </Frame>
                </Document>
            </Dock>
            <Footer>
                <DesktopTab>MNQ 1m</DesktopTab>
                <FooterMenu><Bars /> Menu</FooterMenu>
            </Footer>
        </Window>
    );
}

export default App;
